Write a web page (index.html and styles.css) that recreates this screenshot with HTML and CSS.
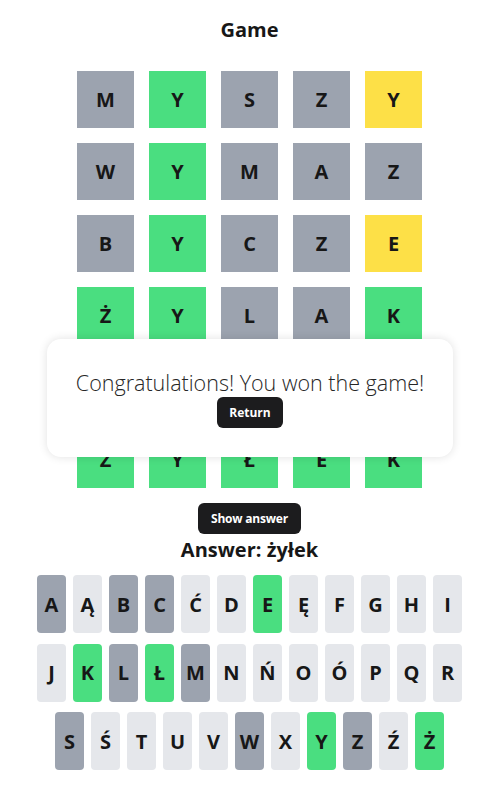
FILE: index.html
```html
<!DOCTYPE html>
<html lang="en">
<head>
<meta charset="utf-8">
<title>Game</title>
<link rel="stylesheet" href="styles.css">
</head>
<body>
<div class="app">
  <h1 class="title">Game</h1>
  <div class="board">
    <div class="tile gray">M</div><div class="tile green">Y</div><div class="tile gray">S</div><div class="tile gray">Z</div><div class="tile yellow">Y</div>
    <div class="tile gray">W</div><div class="tile green">Y</div><div class="tile gray">M</div><div class="tile gray">A</div><div class="tile gray">Z</div>
    <div class="tile gray">B</div><div class="tile green">Y</div><div class="tile gray">C</div><div class="tile gray">Z</div><div class="tile yellow">E</div>
    <div class="tile green">Ż</div><div class="tile green">Y</div><div class="tile gray">L</div><div class="tile gray">A</div><div class="tile green">K</div>
    <div class="tile green">Ż</div><div class="tile green">Y</div><div class="tile gray">W</div><div class="tile gray">A</div><div class="tile green">K</div>
    <div class="tile green">Ż</div><div class="tile green">Y</div><div class="tile green">Ł</div><div class="tile green">E</div><div class="tile green">K</div>
  </div>
  <button class="btn show-btn">Show answer</button>
  <div class="answer">Answer: żyłek</div>
  <div class="keyboard">
    <div class="kb-row">
      <div class="key gray">A</div><div class="key light">Ą</div><div class="key gray">B</div><div class="key gray">C</div><div class="key light">Ć</div><div class="key light">D</div><div class="key green">E</div><div class="key light">Ę</div><div class="key light">F</div><div class="key light">G</div><div class="key light">H</div><div class="key light">I</div>
    </div>
    <div class="kb-row">
      <div class="key light">J</div><div class="key green">K</div><div class="key gray">L</div><div class="key green">Ł</div><div class="key gray">M</div><div class="key light">N</div><div class="key light">Ń</div><div class="key light">O</div><div class="key light">Ó</div><div class="key light">P</div><div class="key light">Q</div><div class="key light">R</div>
    </div>
    <div class="kb-row">
      <div class="key gray">S</div><div class="key light">Ś</div><div class="key light">T</div><div class="key light">U</div><div class="key light">V</div><div class="key gray">W</div><div class="key light">X</div><div class="key green">Y</div><div class="key gray">Z</div><div class="key light">Ź</div><div class="key green">Ż</div>
    </div>
  </div>
  <div class="modal">
    <p class="modal-text">Congratulations! You won the game!</p>
    <button class="btn return-btn">Return</button>
  </div>
</div>
</body>
</html>
```
FILE: styles.css
```css
* { box-sizing: border-box; }
html, body { margin: 0; padding: 0; background: #fff; }
body {
  font-family: "Open Sans", "Noto Sans", "DejaVu Sans", sans-serif;
  color: #171717;
}
.app {
  width: 499px;
  display: flex;
  flex-direction: column;
  align-items: center;
  position: relative;
}
.title {
  font-size: 20px;
  line-height: 28px;
  font-weight: 700;
  margin: 16px 0 27px;
}
.board {
  display: grid;
  grid-template-columns: repeat(5, 57px);
  grid-auto-rows: 57px;
  column-gap: 15px;
  row-gap: 15px;
}
.tile {
  display: flex;
  align-items: center;
  justify-content: center;
  font-size: 20px;
  font-weight: 700;
  color: #171717;
}
.gray { background: #9ca3af; }
.green { background: #4ade80; }
.yellow { background: #fde047; }
.light { background: #e5e7eb; }
.btn {
  font-family: inherit;
  background: #1c1c1e;
  color: #fff;
  border: 0;
  border-radius: 6px;
  font-size: 12px;
  font-weight: 700;
  height: 31px;
  padding: 0;
  white-space: nowrap;
}
.show-btn { margin-top: 15px; width: 103px; letter-spacing: -0.2px; }
.answer {
  font-size: 20px;
  font-weight: 700;
  line-height: 26px;
  margin-top: 3px;
}
.keyboard {
  margin-top: 12px;
  display: flex;
  flex-direction: column;
  align-items: center;
  gap: 10.5px;
}
.kb-row {
  display: flex;
  gap: 7px;
}
.key {
  width: 29px;
  height: 58px;
  border-radius: 4px;
  display: flex;
  align-items: center;
  justify-content: center;
  font-size: 20px;
  font-weight: 700;
  color: #171717;
}
.modal {
  position: absolute;
  left: 47px;
  top: 339px;
  width: 406px;
  height: 118px;
  background: #fff;
  border-radius: 14px;
  box-shadow: 0 0 10px rgba(0,0,0,0.12);
  display: flex;
  flex-direction: column;
  align-items: center;
  padding-top: 31px;
}
.modal-text {
  margin: 0;
  font-size: 21.5px;
  font-weight: 300;
  line-height: 26px;
  color: #262626;
  white-space: nowrap;
}
.return-btn { margin-top: 1px; width: 66px; }
```
